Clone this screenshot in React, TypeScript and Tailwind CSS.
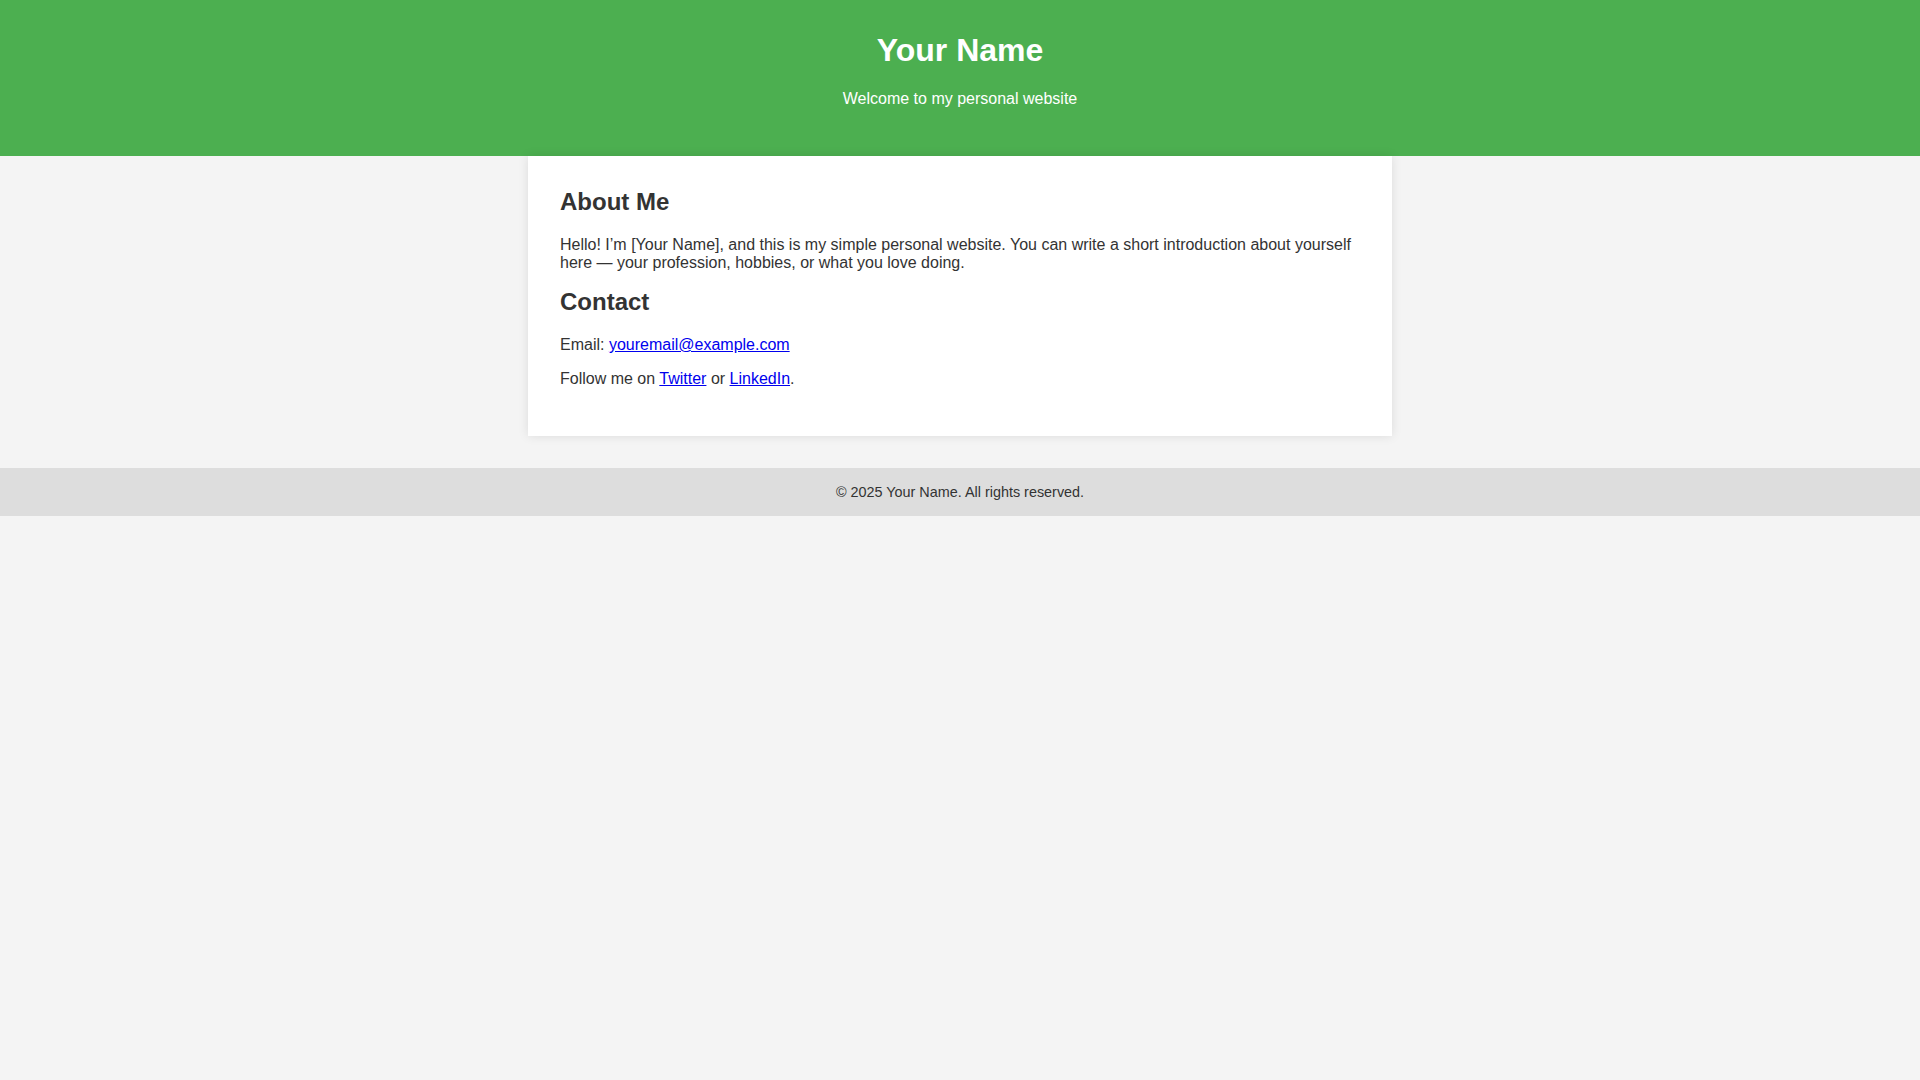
export default function App() {
  return (
    <div className="min-h-screen bg-[#f4f4f4] text-[#333] font-['Liberation_Sans',Arial,sans-serif]">
      <header className="bg-[#4CAF50] text-white text-center pt-8 pb-[48px]">
        <h1 className="text-[32px] leading-[37px] font-bold m-0">Your Name</h1>
        <p className="mt-[21px] text-base leading-[18px]">Welcome to my personal website</p>
      </header>
      <main className="w-[864px] mx-auto bg-white p-8 shadow-[0_0_10px_rgba(0,0,0,0.1)]">
        <h2 className="text-2xl leading-[28px] font-bold">About Me</h2>
        <p className="mt-5 text-base leading-[18px]">
          Hello! I’m [Your Name], and this is my simple personal website. You can write a short introduction about yourself here — your profession, hobbies, or what you love doing.
        </p>
        <h2 className="mt-4 text-2xl leading-[28px] font-bold">Contact</h2>
        <p className="mt-5 text-base leading-[18px]">
          Email: <a href="#" className="text-[#0000EE] underline">youremail@example.com</a>
        </p>
        <p className="mt-4 mb-4 text-base leading-[18px]">
          Follow me on <a href="#" className="text-[#0000EE] underline">Twitter</a> or{" "}
          <a href="#" className="text-[#0000EE] underline">LinkedIn</a>.
        </p>
      </main>
      <footer className="mt-8 bg-[#ddd] text-center py-4 text-[14.4px] leading-[16px] text-[#333]">
        © 2025 Your Name. All rights reserved.
      </footer>
    </div>
  );
}
